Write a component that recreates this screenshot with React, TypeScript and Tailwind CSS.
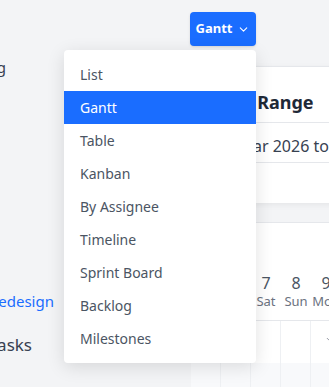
import { ChevronDown } from "lucide-react"

const views = [
    "List",
    "Gantt",
    "Table",
    "Kanban",
    "By Assignee",
    "Timeline",
    "Sprint Board",
    "Backlog",
    "Milestones",
]

const days = [
    { n: "5", d: "Thu" },
    { n: "6", d: "Fri" },
    { n: "7", d: "Sat" },
    { n: "8", d: "Sun" },
    { n: "9", d: "Mon" },
]

export default function App() {
    const active = "Gantt"

    return (
        <div
            className="w-[329px] h-[387px] overflow-hidden bg-[#f3f4f6] flex"
            style={{ fontFamily: "'Noto Sans', 'Open Sans', sans-serif" }}
        >
            {/* sidebar, mostly scrolled out of view */}
            <div className="w-[190px] shrink-0 flex flex-col text-[15px] text-[#374151]">
                <div className="mt-[56px] h-[22px] flex justify-end w-[6px] overflow-hidden whitespace-nowrap">
                    <span>Planning</span>
                </div>
                <div className="mt-[212px] h-[22px] flex justify-end w-[54px] overflow-hidden whitespace-nowrap text-[#1a6dff]">
                    <span>Website Redesign</span>
                </div>
                <div className="mt-[22px] h-[22px] flex items-center justify-end w-[32px] overflow-hidden whitespace-nowrap text-[17px]">
                    <span>Tasks</span>
                </div>
            </div>

            {/* main */}
            <div className="flex-1 flex flex-col min-w-0">
                <div className="pt-[12px] h-[66px] shrink-0">
                    <div className="relative w-[66px]">
                        <button className="h-[34px] w-[66px] rounded-[4px] bg-[#1a6dff] text-white text-[13px] font-bold flex items-center justify-center gap-[5px] shadow-sm">
                            Gantt
                            <ChevronDown size={13} strokeWidth={2} />
                        </button>

                        <div className="absolute right-0 top-[38px] z-10 w-[192px] rounded-[4px] bg-white py-[8px] shadow-[0_4px_18px_rgba(0,0,0,0.12)]">
                            {views.map((v) => (
                                <div
                                    key={v}
                                    className={
                                        v === active
                                            ? "h-[33px] px-4 flex items-center text-[14px] bg-[#1a6dff] text-white"
                                            : "h-[33px] px-4 flex items-center text-[14px] text-[#4b5563]"
                                    }
                                >
                                    {v}
                                </div>
                            ))}
                        </div>
                    </div>
                </div>

                {/* date range card */}
                <div className="ml-[1px] w-[300px] h-[137px] shrink-0 bg-white border-t border-[#e5e7eb] shadow-[0_2px_6px_rgba(0,0,0,0.06)]">
                    <div className="h-[56px] flex items-end pb-[6px] px-[19px] border-b border-[#e5e7eb]">
                        <span className="text-[18px] font-bold text-[#1f2937] whitespace-nowrap">Date Range</span>
                    </div>
                    <div className="h-[40px] flex items-center pt-[6px] px-[25px] border-b border-[#e5e7eb] text-[16px] text-[#374151] whitespace-nowrap">
                        01 Mar 2026 to 31 Mar 2026
                    </div>
                </div>

                {/* gantt card */}
                <div className="mt-[19px] ml-[1px] w-[300px] shrink-0 bg-white border-t border-[#e5e7eb]">
                    <div className="h-[98px] flex items-end border-b border-[#e5e7eb]">
                        {days.map((d) => (
                            <div key={d.d} className="w-[30px] shrink-0 flex flex-col items-center pb-[10px] text-[#6b7280]">
                                <span className="text-[16px] leading-[20px] text-[#4b5563]">{d.n}</span>
                                <span className="text-[13px] leading-[17px]">{d.d}</span>
                            </div>
                        ))}
                    </div>
                    <div className="flex h-[42px]">
                        {days.map((d, i) => (
                            <div key={d.d} className="w-[30px] shrink-0 border-r border-[#eef0f3] flex justify-center pt-[14px]">
                                {i === 4 ? <ChevronDown size={9} className="ml-[8px] text-[#6b7280]" /> : null}
                            </div>
                        ))}
                    </div>
                    <div className="flex h-[40px] bg-[#f8f9fb]">
                        {days.map((d) => (
                            <div key={d.d} className="w-[30px] shrink-0 border-r border-[#eef0f3]" />
                        ))}
                    </div>
                </div>
            </div>
        </div>
    )
}
